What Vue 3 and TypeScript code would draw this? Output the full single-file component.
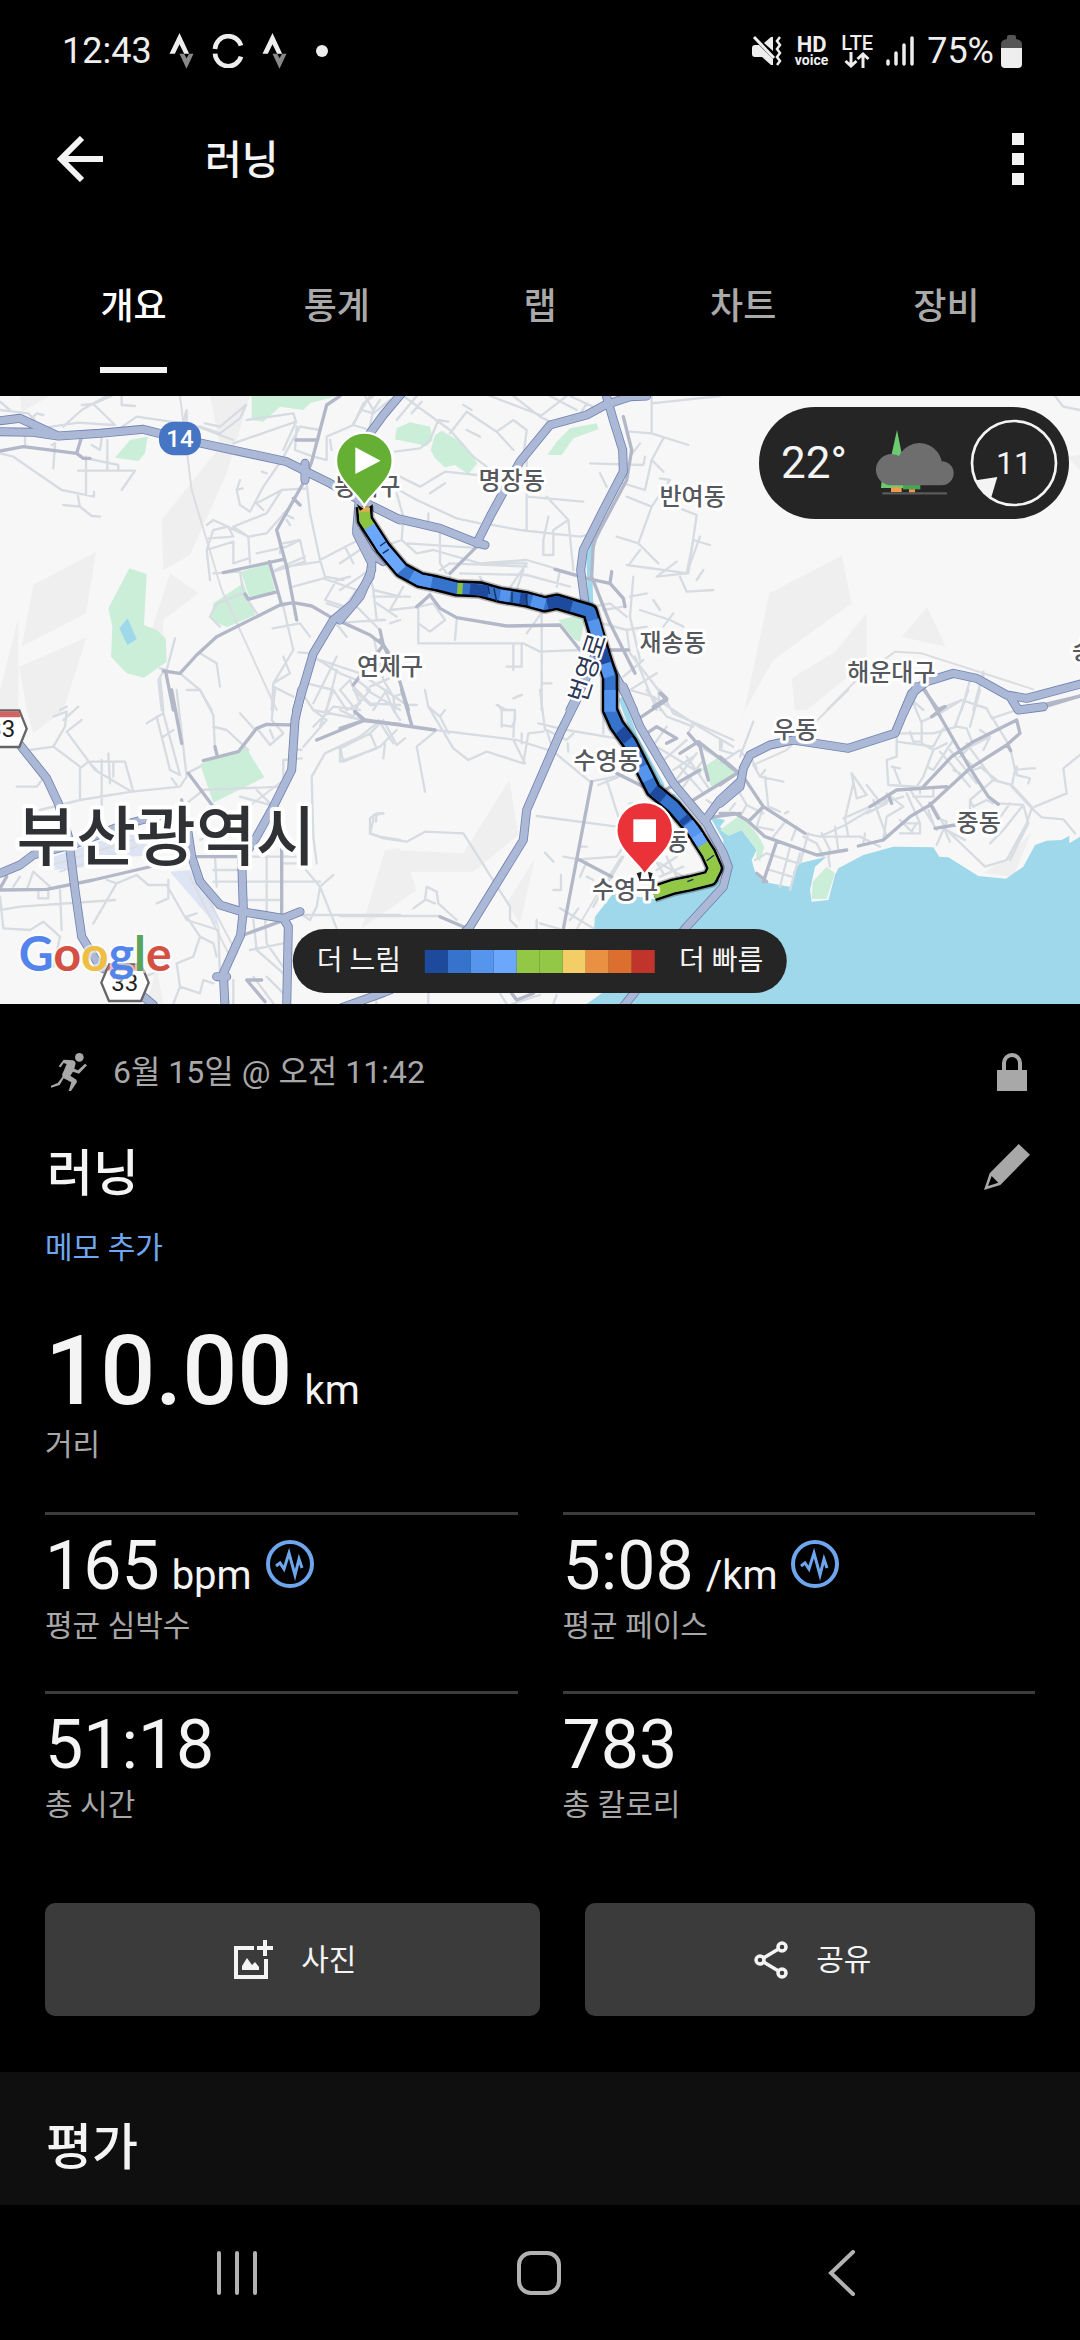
<script setup lang="ts">
import { ref } from 'vue'

type Piece = [tile: number, d: string]
interface Layer { kind: string; pieces: Piece[] }
interface Stat { value: string; unit?: string; label: string; trend?: boolean }

const tabs = ['개요', '통계', '랩', '차트', '장비']
const activeTab = ref(0)

const stats: Stat[] = [
  { value: '165', unit: 'bpm', label: '평균 심박수', trend: true },
  { value: '5:08', unit: '/km', label: '평균 페이스', trend: true },
  { value: '51:18', label: '총 시간' },
  { value: '783', label: '총 칼로리' },
]

const paceColors = ['#1d4a9c', '#3673cc', '#5595ee', '#6ba7fa', '#92c846', '#92c846', '#f3cd66', '#ea9042', '#dc6f2d', '#c1342c']

// The map is stored in six tiles; each geometry is relative to its tile's origin.
const tiles = [[0, -18], [1020, -18], [2160, -18], [0, 882], [1020, 882], [2160, 882]]
const at = (t: number) => `translate(${tiles[t][0]} ${tiles[t][1]})`

const areas: Layer[] = [
  { kind: 'terrain', pieces: [
    [0, 'M100 585L288 485L258 670L65 770ZM58 830L260 742L190 960L100 1030L80 960ZM485 390L660 170L630 18H750L680 250L570 495L490 540ZM510 550L595 610L490 690V735L455 720ZM55 685V960H0V900ZM60 18H150L65 65Z'],
    [2, 'M148 610L365 497L395 640L160 810L75 960L65 1000ZM215 865L345 785L440 670V815L260 960L225 960ZM545 740L622 652L677 770ZM1040 200L1080 195V240Z'],
    [4, 'M160 480L370 490L508 270L535 435L400 545L210 545L230 600L65 715ZM500 640L585 505L540 700Z'],
    [3, 'M1155 480L1200 475V600L1085 715ZM470 830L490 942H440Z'],
    [5, 'M790 550L865 500L935 425L880 560Z'],
  ] },
  { kind: 'yard', pieces: [
    [3, 'M160 500L370 430L480 450L470 495L390 500L370 485L260 530L165 540ZM510 545L570 540L640 640L660 720Z'],
  ] },
  { kind: 'park', pieces: [
    [0, 'M755 18H1010L930 40L910 60L840 50L790 95L755 90ZM390 150L443 140L435 190L415 213L345 203ZM388 535L440 552L432 705L470 720L497 745L500 815L432 863L380 850L333 800L337 710L325 655ZM723 545L805 520L825 605L750 628ZM640 640L730 580L765 675L680 712L635 690ZM1190 130L1200 115V150H1188Z'],
    [1, 'M170 115L210 97L270 110L278 150L260 168L165 148ZM285 135L305 122L370 160L412 220L385 253L345 225L315 232L285 205L272 180ZM650 155L690 115L770 100L775 118L700 145L665 195H622ZM655 690L700 680L735 690L720 755L705 750Z'],
    [3, 'M600 222L738 172L793 262L640 338Z'],
    [4, 'M1085 235L1130 205L1180 250L1115 290ZM860 340L880 335V350Z'],
  ] },
  { kind: 'water', pieces: [
    [0, 'M383 685L410 748L382 765L358 715Z'],
    [5, 'M-378 717L-375 680L-320 610L-180 630L-90 600L10 565L10 450L-30 380L15 390L0 410L25 437L65 420L110 480L95 510L105 545L130 575L215 592L220 545L240 520L320 500L285 530L270 600L275 635L325 630L345 555L355 535L430 495L520 470L640 472L658 500L685 502L775 558L858 566L910 530L945 465L980 452L1025 450L1048 437V460L1080 440V942H-400L-355 910Z'],
  ] },
  { kind: 'park', pieces: [
    [5, 'M0 200L45 245L0 280ZM0 420L60 375L110 430L133 470L120 515L108 500L110 480L65 420L25 437ZM278 575L320 530L345 550L320 627H275Z'],
  ] },
]

const roads: Layer[] = [
  { kind: 'river', pieces: [
    [1, 'M762 455L747 500L752 640'],
    [4, 'M845 30L885 140L965 285M1000 320L1080 420'],
  ] },
  { kind: 'rail', pieces: [
    [0, 'M540 18L575 300L665 600L830 960'],
    [2, 'M320 960L410 870L525 785L605 790L940 898'],
    [5, 'M385 0L200 180L100 225'],
    [3, 'M570 560L690 800M590 560L710 790M140 530L400 450M180 545L410 470M600 450L640 430L845 275'],
    [4, 'M845 500L780 600L710 717'],
  ] },
  { kind: 'minor', pieces: [
    [0, 'M0 60L85 70L105 90M0 35L30 60M95 85L110 70L130 75M120 115L235 98L340 105M190 110L245 60L320 18M245 45L280 42L345 105M280 42L335 18M365 18V45L405 48M410 80L360 115M410 80L580 105L700 150M550 95L560 60V110M615 100L660 110L738 45L720 85L660 130L600 110M740 90L880 70L888 95L700 160M888 95L850 180M155 165L165 160L160 235M0 190L40 200L185 300L282 320V305M232 310L240 350L190 345M240 350L275 378L300 380M258 200V315M235 242H405L365 300M322 150V240M270 207L355 225V240M275 165L300 180L305 145M75 165V140L60 125'],
    [0, 'M720 270L710 300L720 345L750 365L790 290L845 210L900 110M845 300L770 340L790 360M710 300L728 295M620 405L640 390L745 440L700 410L800 370L845 300L920 295M625 445L700 440L685 410L640 420L620 480L630 570M620 480L700 455M700 455V520L745 505M745 440L750 520M745 440L800 430L870 350M640 550L720 545L730 610L650 640L630 680L660 710M730 610L770 670M770 490L860 470L900 450L915 515L820 545M900 450L850 460M840 490V460M915 500L825 540M850 370L880 385M860 390L870 405M920 280L930 370L960 510L975 560L1030 570M960 510L1075 450M860 530L960 515M880 590L970 565L1070 600L1035 650L975 630L1010 570L1050 560M980 640L1040 660M1035 470L1060 520M818 715L900 700L930 740M850 650L880 780L820 880L815 960M820 880L870 850L850 800M820 890L880 920M895 787L935 790M785 245L800 250'],
    [0, 'M600 790L650 820L660 890M480 835L500 840L525 745M480 860L490 960M540 850L600 900L635 960M490 845L475 870L485 960M180 960L200 950M900 110L960 120L955 150M890 110L885 180L940 200L980 210V140L1060 105L1110 120M1060 105L1090 40L1120 18M1085 60L1120 70L1170 30M990 150L995 180M1000 690L1040 740M1110 560L1120 600L1200 620M1120 600L1130 690M1060 640L1140 720M940 800L1020 850L1070 870L1110 900L1060 960M960 810L1080 850M920 880L1000 900L1040 960M1010 800L940 940M1060 890L1110 940L1200 945M990 700L1150 690M1130 640L1190 680M1180 860L1110 890M1010 840L980 960'],
    [1, 'M40 100L90 18M75 18L100 60L85 130M100 60L120 30M170 90L230 18M165 185L240 175L270 150L295 90L325 95M215 70L245 35M190 18L330 120L400 200L440 230M370 45L395 60M380 65L330 130M380 65L470 125L520 90L560 120L550 200M380 120L420 140M470 125L520 180M520 18L600 80L640 100M450 18L600 75M600 80L680 18M630 18L710 60M710 90L740 40M690 18L780 60M935 40L1140 18M935 18V130L1045 165M870 125L935 130M970 145L935 210L915 300L850 280M935 210L970 245M750 220L910 225L915 200M780 250L800 290M870 200L900 160M860 320L935 350L895 460L955 520M935 350L990 270L960 265M900 480L870 520M895 460L830 440M1020 355L1070 375L1045 550L860 525'],
    [1, 'M160 290L230 330L350 385L420 400M180 260L240 290L315 245L410 255M270 310L315 280M170 310L190 380L185 450L70 490M185 450L230 490L280 480L420 520L560 510L730 560M200 460L430 475M300 420V520L320 550M265 370V410M430 400L540 420L720 440L760 430M560 420V320L730 335M560 200V320M620 320L685 390L700 540M685 390L640 420V495H610V450L625 380M405 520H560L505 600M550 540L530 600M660 540L650 590M190 590L150 660L240 650L270 610M240 650L280 640L315 690L270 725L235 700M100 620H210M235 650V760L550 760L600 785L720 780M345 750L350 690M545 760V830H500M520 760V840M605 610V880H635M605 880V960M300 540L330 520L560 530M330 560L320 600M360 550L560 555L690 590M420 560L440 600M640 620L560 730M0 520L60 480M0 600L60 560L100 530M110 690H135M150 700L180 690M0 690L100 740L130 870'],
    [1, 'M30 870L0 900M30 870L60 940L20 960M130 870L160 920L165 960M60 850L200 945H230M470 945L500 960M520 925L545 915M760 650L810 640L860 680M790 660L850 650M870 620L920 610M940 630L960 660M900 660L990 690L1030 710M1000 670L970 710M1010 515L950 560L1040 550L1060 450L1110 465M1090 540L1070 570M1020 560L1040 605L1120 600M750 690L860 720L870 790L955 900L960 960M860 720L920 710M850 860L910 810M870 900L950 850M885 800L950 960M1080 440L1040 550M880 560L870 680L900 810'],
    [2, 'M1005 18L1030 50L1080 60M575 930L610 960M650 960L725 930L800 955M725 960L750 870M760 960L790 845M790 860V845'],
    [3, 'M480 0L490 70L440 100M490 70L540 255L510 240L470 80M520 120L490 140M530 0L560 260L540 290L395 305L240 330L120 360M515 265L530 285M160 80L200 65L195 110L160 170L90 180M235 50L190 90M245 90L200 125M200 125L285 240L395 305M160 170L240 230V330M240 235L265 215H375L400 305M325 190L330 280M305 210V350M340 220V260M265 215L290 240M50 290H110L130 265M600 0L640 75L645 180M640 110L680 120L745 180M720 70L765 120M825 0L815 90L850 130L810 165L775 120M810 120L820 145M560 0L600 0M560 250L600 230M560 340L610 300M600 300L850 290M850 275V210L905 205M905 180L870 175M900 0L940 60L980 90L910 170M940 60L1090 90M1000 0L960 110M940 110L1000 50L1080 60M1020 0L1060 50M1100 0L1200 60M1120 60L1160 0M1135 90L1180 160L1160 130'],
    [3, 'M910 400V530L960 590L1010 715M960 590L1000 555M960 590L950 650L930 690L900 670M950 520L940 440L935 260L975 190L1080 140L1130 100M1020 170L1030 215L1140 170L1190 120M1150 370L1120 375V390L1110 430L1140 440L1200 450M640 575H960M640 540H720M745 500H900M645 500L650 590M900 400V530M800 450V690M740 630H840M845 520H900M720 320L830 350M770 300L820 350M0 620L10 715L90 720L130 695L180 740L160 830M0 660L60 650L345 630M80 600L100 545L150 590M115 600V625H145V600M180 600L185 720M60 560L40 590M280 700L350 580L320 570M350 580L410 555L445 585H500L560 690L655 720M505 570V625L470 640M590 670L560 680L600 740L580 800L530 820M655 720L660 860M600 740L640 760L650 800M900 675H1200M795 680L800 760L870 860M760 690L770 780L850 850M750 780L850 760M530 820L540 890L520 942M540 890L600 910L610 870L640 880M760 860L820 940M800 860L860 920M700 870L700 942M1010 715V717M430 860L460 850'],
    [4, 'M255 0L265 50L340 175L385 210L440 185L550 220L565 130L610 125M265 50L300 80L315 60M300 80L325 130M600 0L615 120M595 100L680 120L830 145M485 110V60L475 45M485 60H525L520 140M525 60V90L515 110L485 105M285 120L530 150L640 185L750 275L850 255M520 150L555 220M545 130V160M640 185L620 120L680 150L700 130M683 160L685 185M530 20L545 15M0 175L90 130L110 175L0 215V175M90 130L130 90L170 165L195 145M135 160L130 205M230 170L285 125M230 170L255 305M0 60L40 80L60 30M40 0L90 45L110 45M135 0L160 60L180 90M160 20L190 10M255 425L370 430L510 650V690L530 710M255 425L200 455L130 445L90 430V385L110 370H130M110 370L108 395M590 378L830 410M800 270L835 380M775 285L850 255M720 470H740M615 488L640 515M670 500L715 508L830 500L850 470M720 560L740 515M740 560L760 570M663 555V600H640M220 655L255 630L260 590L290 605L295 640L350 690M260 630L285 640M0 678H300M660 655L760 715M690 690L715 655M590 690V717M600 700L660 717M265 910V942M105 920L110 942M480 910L500 942M515 942L600 915M640 942L650 915'],
    [4, 'M870 0L940 20L1060 100L1180 170M920 0L980 80L1060 110M960 0L1000 70L1180 150M1060 100L1045 130M1145 150V175M950 170L1000 200L1080 250M930 180L980 110M960 220L1040 150M1000 280L1070 190M1030 290L1090 210M1040 200L1110 300M1020 230L1090 310M1130 200L1080 170M1060 200L1000 240M960 520L1030 560M940 500L970 550M980 500L1010 560M950 540L1010 500M960 560L1030 530M1100 330L1130 350M850 500L760 650M790 0V130'],
    [5, 'M0 150V180L35 190M0 220L60 180L75 200M60 200L100 95M100 225L120 260L190 275M120 260L135 240M135 260L145 350L180 365M110 235L90 200M195 370L205 365M60 310L80 345L60 380M80 345L130 370M45 340L30 360M130 350L110 410L160 420M200 390L160 440M230 410L215 450M395 250L410 325L440 315L395 250L400 280L375 385L385 440M440 285L475 330M370 385L450 350L550 320M255 430L300 440L375 405L450 360M265 430L240 520M170 455L310 500L290 460L250 440M305 430L330 480L325 500L330 530M210 470L180 590M240 490L210 600M140 490L235 520M150 540L215 560M105 510L140 490M345 410L355 480M300 440L420 440L480 470M435 430L430 460M460 330L500 440M540 430H600V400M500 310L550 350L500 380L490 450M540 390L580 430M555 400H600L560 310M590 400L570 430'],
    [5, 'M580 40L605 100V160L640 180L610 260L590 290L505 285L500 210L530 200V130L640 130L710 110L740 115L760 165M605 95L660 70L725 30L800 55L815 85L890 60M745 0L705 110M780 0L750 110M815 80L870 170L885 240L875 290L935 355L920 400L860 510L795 530L680 420M540 235L515 230M520 230L540 280M570 125L580 155H600M530 155L640 170L670 115M640 180L680 160M620 230L640 240L700 150M660 185L750 290M690 180L770 280M740 160L820 270L875 285M780 230L830 270M720 200L750 170L810 140L780 120M810 140L790 180M700 240L720 250M740 210L760 230M760 240L790 230M820 270L750 330L760 350L800 330L820 340M750 330V380M885 240L930 235H945M890 230V255L930 265L925 280M945 350L1040 310L1030 235L1080 195M935 355L965 382L1030 388L1065 430M835 340L910 345L850 420L810 460M870 340L820 410M910 345L925 400L870 510M940 355L875 285M655 385L680 395L650 465M670 410L690 455M600 290V310M570 300L620 370L650 420M625 360L640 400M640 350L680 420L735 450M580 320H640V300M510 330H490M500 340L440 370'],
  ] },
  { kind: 'mid', pieces: [
    [0, 'M0 183L70 170L230 190L250 205H270M230 190L245 140M1020 18L980 45L935 215L915 270L830 420L860 530L890 690M670 548L850 508M808 515L845 645M735 612L745 628L825 607M490 843L540 850L590 795L650 740L770 680L840 645L880 638L935 648L990 680L1110 735L1150 765L1190 850M498 850L520 960M888 150H950M1060 885L1150 765L1140 720M880 325L900 345'],
    [1, 'M410 470L330 550M270 615L300 655L350 683L500 708L660 705L720 780H865M230 650L270 615M645 538L740 565L810 580L850 625L855 650M815 545L810 580M850 80L875 180L860 270L780 420L760 460L755 560L810 700L885 850M120 750L160 810L205 960M940 950L980 925L965 910'],
    [2, 'M605 890L655 960M900 960L1080 918M650 960L675 950'],
    [3, 'M515 0L545 160M0 600L140 598L280 570L460 528M565 250L640 350M580 500H720M845 460V690M610 212L715 185L770 115L800 103L880 105M950 150L1090 92L1200 103M1065 65L1090 90M730 735L840 695M740 870H785M740 870L795 935M645 170L652 200M0 595L20 560M545 330L575 520L660 650'],
    [4, 'M0 115L75 90L285 120M45 65L75 90M185 0L215 105M755 275L670 717M715 508L815 560M300 680L370 710M905 80L980 30L960 10M920 130L950 110L1010 145L980 160M1020 190L1075 155L1190 245M1045 130L1080 170L1105 270M1060 330L1190 250M975 300L1080 240M830 250L940 305M1090 385L1200 370M515 910L530 930L580 910'],
    [5, 'M0 200L70 260L130 350L255 430M0 370L45 370L80 390L135 440L290 495L380 480M0 285L50 250M170 455L130 575M90 390L130 350M450 350L530 300L680 290M610 290L695 200L760 155L890 90L900 130L860 165L750 235L630 345L570 380L490 450L415 468M615 0L750 235L805 320L835 343M630 340L655 385M645 415L705 405M862 165L872 182M635 80L675 50M110 550L140 575M975 50L1080 18M505 315L515 340'],
  ] },
]

const highwayPieces: Piece[] = [
  [0, 'M0 92L60 85L175 138M0 125L100 127L175 138L300 130L430 118L550 148L860 215L920 245L990 280L1060 320L1200 390M915 220V270M1070 430L1115 520L1110 560L1060 640L1000 690L940 790L890 960'],
  [1, 'M100 350L170 385L300 415L400 455L435 465M410 460L450 380L540 215L630 105L740 75L795 45L870 20L920 18M797 10L820 90L848 180L850 245L790 360L730 480L722 540L735 640L760 740L850 900L880 960M185 10L130 75L90 130L65 250L50 420L90 490L130 515M95 500V540L60 620L0 690M690 960L740 860L770 780'],
  [2, 'M550 970L575 910L620 875L700 850L770 865L860 915L920 925L1090 880M870 920L895 960L970 950'],
  [3, 'M905 0L885 90L875 240L820 350L770 440L725 510L730 660L722 735L670 850L675 950M650 860H680M60 165L140 265L175 340L205 440L225 600L245 740L300 830L360 860L460 945M0 550L60 525L100 495L230 460L370 405L480 375L560 400L575 500L600 575L660 645L725 665L850 685L900 665M850 685L865 710L860 950'],
  [4, 'M710 30L660 130L560 360L550 450L390 710L250 860L130 908L0 955M850 -10L900 110L1000 280L1100 400L1150 490L1165 530L1150 590L1040 710L850 950M1100 385L1140 330L1200 275'],
  [5, 'M0 340L60 290L70 235L90 195L150 165L220 150L385 175L525 130L550 70L590 -10'],
]

const route = 'M72 350L75 390L130 475L185 540L240 570L290 580L350 595L420 598L480 615L560 628L615 643L650 635L750 665L790 800L810 860V960L830 1005L870 1060L905 1130L940 1200L1000 1250L1060 1320L1105 1390L1125 1435L1110 1465L1050 1480L1000 1490L940 1510'
const routeParts = [
  { color: '#ddaf50', d: 'M72 350L73 368' },
  { color: '#8ac43f', d: 'M73 366L75 390L90 412' },
  { color: '#6ba7fa', d: 'M88 410L130 475L185 540' },
  { color: '#5595ee', d: 'M215 556L240 570L275 577M790 805L808 860M810 900V965' },
  { color: '#8ac43f', d: 'M352 595L368 596' },
  { color: '#1d4a9c', d: 'M390 597L445 604M540 625L562 628M622 642L650 635L695 648M785 780L797 820M940 1200L970 1225M1030 1283L1042 1297' },
  { color: '#5595ee', d: 'M480 615L510 620M575 632L615 643M760 690L782 770M905 1130L925 1170M1045 1300L1075 1342' },
  { color: '#1d4a9c', d: 'M840 1020L865 1050' },
  { color: '#6ba7fa', d: 'M1070 1335L1090 1367' },
  { color: '#92c846', d: 'M1088 1364L1105 1390L1125 1435L1110 1465L1050 1480L1000 1490L940 1510' },
]

const places = [
  { name: '동래구', tile: 0, x: 1102, y: 316 },
  { name: '명장동', tile: 1, x: 515, y: 296 },
  { name: '반여동', tile: 1, x: 1058, y: 344 },
  { name: '재송동', tile: 1, x: 998, y: 784 },
  { name: '연제구', tile: 1, x: 150, y: 855 },
  { name: '해운대구', tile: 2, x: 514, y: 874 },
  { name: '송정동', tile: 2, x: 1155, y: 808 },
  { name: '수영동', tile: 4, x: 800, y: 236 },
  { name: '광안동', tile: 4, x: 945, y: 480 },
  { name: '수영구', tile: 4, x: 855, y: 625 },
  { name: '우동', tile: 5, x: 226, y: 143 },
  { name: '중동', tile: 5, x: 776, y: 424 },
]
</script>

<template>
  <div class="screen">
    <header class="status">
      <div class="status-left">
        <span class="clock">12:43</span>
        <svg class="strava" viewBox="486 100 72 108"><path d="M516 100L545 162H530L516 134L502 162H486Z" fill="#eee" /><path d="M516 162H530L537 176L545 162H558L537 207Z" fill="#888" /></svg>
        <svg class="ring" viewBox="612 102 98 102"><path d="M622 147A40 41 0 0 1 700 137M622 161A40 41 0 0 0 700 170" fill="none" stroke="#eee" stroke-width="14" /></svg>
        <svg class="strava" viewBox="486 100 72 108"><path d="M516 100L545 162H530L516 134L502 162H486Z" fill="#eee" /><path d="M516 162H530L537 176L545 162H558L537 207Z" fill="#888" /></svg>
        <span class="more-dot"></span>
      </div>
      <div class="status-right">
        <svg width="30" height="30" viewBox="0 0 30 30" fill="#eee"><path d="M0 12Q0 9 3 9H7L21 23V29H19L10 21H3Q0 21 0 18ZM12 7L19 1H21V15Z" /><path d="M2 1L22 22" stroke="#eee" stroke-width="3" /><path d="M28 1L25 5L28 9L25 13L28 17L25 21L28 25L25 29" fill="none" stroke="#eee" stroke-width="2.5" /></svg>
        <span class="hd"><b>HD</b><small>voice</small></span>
        <span class="lte"><b>LTE</b><svg width="26" height="16" viewBox="0 0 26 16" fill="none" stroke="#eee" stroke-width="3"><path d="M7 0V14M1.5 9L7 14L12.5 9M19 16V2M13.5 7L19 2L24.5 7" /></svg></span>
        <svg width="28" height="30" viewBox="0 0 28 30" stroke="#eee" stroke-width="3.5" stroke-linecap="round"><path d="M2 25V28M10 17V28M18 9V28M26 2V28" /></svg>
        <span class="clock battery-text">75%</span>
        <svg width="21" height="33" viewBox="0 0 21 33"><path d="M6 2Q6 0 8 0H13Q15 0 15 2V4Q21 5 21 9V13H0V9Q0 5 6 4Z" fill="#555" /><path d="M0 13H21V29Q21 33 17 33H4Q0 33 0 29Z" fill="#eee" /></svg>
      </div>
    </header>

    <div class="appbar">
      <button class="plain" aria-label="뒤로"><svg width="46" height="46" viewBox="0 0 46 46" fill="none" stroke="#f4f4f4" stroke-width="6"><path d="M46 23H5M25 2L4 23L25 44" /></svg></button>
      <h1>러닝</h1>
      <button class="plain" aria-label="메뉴"><svg width="12" height="52" viewBox="0 0 12 52" fill="#f4f4f4"><path d="M0 0H12V12H0ZM0 20H12V32H0ZM0 40H12V52H0Z" /></svg></button>
    </div>

    <nav class="tabs">
      <button v-for="(tab, i) in tabs" :key="tab" class="tab" :class="{ active: i === activeTab }" @click="activeTab = i"><span>{{ tab }}</span></button>
    </nav>

    <section class="map">
      <svg class="map-canvas" viewBox="0 0 3240 1824" preserveAspectRatio="xMidYMid slice">
        <g v-for="(layer, i) in areas" :key="'a' + i" :class="layer.kind">
          <path v-for="(p, j) in layer.pieces" :key="j" :transform="at(p[0])" :d="p[1]" />
        </g>
        <g v-for="layer in roads" :key="layer.kind" class="road" :class="layer.kind">
          <path v-for="(p, j) in layer.pieces" :key="j" :transform="at(p[0])" :d="p[1]" />
        </g>
        <g v-for="kind in ['casing', 'highway']" :key="kind" class="road" :class="kind">
          <path v-for="(p, j) in highwayPieces" :key="j" :transform="at(p[0])" :d="p[1]" />
        </g>

        <g :transform="at(1)" fill="none" stroke-linejoin="round">
          <path :d="route" stroke="#000" stroke-opacity=".25" stroke-width="58" />
          <path :d="route" stroke="#000" stroke-width="49" />
          <path :d="route" stroke="#3673cc" stroke-width="34" />
          <path v-for="(part, i) in routeParts" :key="i" :d="part.d" :stroke="part.color" stroke-width="34" />
          <path d="M120 468L138 455M128 490L146 478M462 595L470 635M516 605V638M558 612L562 648M445 590L448 612M1100 1412L1122 1396M1042 1475L1060 1468" stroke="#12305f" stroke-width="4" />
        </g>

        <g class="place">
          <text v-for="p in places" :key="p.name" :transform="at(p.tile)" :x="p.x" :y="p.y">{{ p.name }}</text>
        </g>
        <g :transform="at(1)"><text class="street" transform="translate(768 842) rotate(-72)">번영로</text></g>
        <g :transform="at(3)">
          <text class="city" x="498" y="510">부산광역시</text>
          <path class="shield" d="M-48 61H58L80 116L58 171H-48L-70 116Z" /><path d="M-48 64H56L62 82H-54Z" fill="#cf6663" /><text class="shield-text" x="5" y="142">33</text>
          <path class="shield" d="M327 823H423L446 878L423 933H327L304 878Z" /><path d="M327 826H423L430 842H320Z" fill="#cf6663" /><text class="shield-text" x="374" y="903">33</text>
          <text class="google" x="56" y="842"><tspan fill="#5284ec">G</tspan><tspan fill="#d35043">o</tspan><tspan fill="#efbf45">o</tspan><tspan fill="#5284ec">g</tspan><tspan fill="#5ba55b">l</tspan><tspan fill="#d35043">e</tspan></text>
        </g>
        <g :transform="at(0)"><rect x="477" y="95" width="126" height="101" rx="46" fill="#4575c3" /><text class="route-no" x="540" y="170">14</text></g>

        <g :transform="at(1)">
          <path d="M50 342L70 356L60 362ZM98 342V362L88 352Z" fill="#000" />
          <path class="pin" d="M73 348C52 308 -12 272 -12 213A85 85 0 1 1 158 213C158 272 94 308 73 348Z" fill="#65b034" />
          <path d="M46 172L122 212L46 252Z" fill="#fff" />
        </g>
        <g :transform="at(4)">
          <path d="M890 550L905 545L900 575ZM938 550L924 545L930 575Z" fill="#222" />
          <path class="pin" d="M914 555C893 515 829 480 829 421A85 85 0 1 1 999 421C999 480 935 515 914 555Z" fill="#e93338" />
          <path d="M880 388H948V456H880Z" fill="#fff" />
        </g>
      </svg>

      <div class="weather">
        <span class="temp">22°</span>
        <svg class="sky" width="80" height="66" viewBox="0 0 240 198">
          <path d="M66 0L84 90H46ZM20 150H110V174H18Z" fill="#6ccb70" /><path d="M84 164H136V178H84Z" fill="#4aa350" />
          <path d="M48 172H80V186H48ZM102 178H120V188H102Z" fill="#eb9b4b" /><path d="M22 190H216" stroke="#5a5a5a" stroke-width="7" />
          <path d="M44 166A47 47 0 1 1 72 78A68 68 0 0 1 200 94A36 36 0 0 1 200 166Z" fill="#6e6e6e" />
        </svg>
        <span class="wind">
          <svg width="88" height="88" viewBox="0 0 264 264"><circle cx="132" cy="132" r="126" fill="none" stroke="#f4f4f4" stroke-width="8" /><path d="M18 184L82 174L63 238Q32 214 18 184Z" fill="#f4f4f4" /></svg>
          <span>11</span>
        </span>
      </div>

      <div class="legend">
        <span>더 느림</span>
        <div class="scale"><i v-for="(c, i) in paceColors" :key="i" :style="{ background: c }"></i></div>
        <span>더 빠름</span>
      </div>
    </section>

    <main class="details">
      <div class="meta">
        <svg width="36" height="38" viewBox="0 0 108 114" fill="#a8a8a8"><circle cx="85" cy="13" r="13" /><path d="M38 20L66 22Q78 27 72 38L70 47L81 52L102 32L108 37L84 62L66 56L58 68L76 80L78 87L60 114H53L61 88L38 76L26 96L0 104V98L20 90L34 72Q32 62 38 54L47 33L38 30L29 43L23 40Z" /></svg>
        <time>6월 15일 @ 오전 11:42</time>
        <svg width="30" height="38" viewBox="0 0 30 38"><path d="M0 17H30V38H0Z" fill="#a8a8a8" /><path d="M7 18V10A8 8 0 0 1 23 10V18" fill="none" stroke="#a8a8a8" stroke-width="4" /></svg>
      </div>
      <div class="title-row">
        <h2>러닝</h2>
        <button class="plain" aria-label="편집"><svg width="46" height="46" viewBox="0 0 138 138" fill="#a8a8a8"><path d="M104 0L138 32L49 123L0 138L17 88ZM23 96L12 126L43 116Z" fill-rule="evenodd" /></svg></button>
      </div>
      <a class="memo" href="#memo">메모 추가</a>

      <p class="distance"><strong>10.00</strong><span class="unit">km</span></p>
      <p class="label">거리</p>

      <div class="stats">
        <div v-for="s in stats" :key="s.label" class="stat">
          <p class="value">
            <span>{{ s.value }}</span><span v-if="s.unit" class="unit">{{ s.unit }}</span>
            <svg v-if="s.trend" class="trend" viewBox="0 0 48 48" fill="none" stroke="#6ea6ee"><circle cx="24" cy="24" r="22" stroke-width="4" /><path d="M10 26L14 23L18 29L23 13L29 35L33 19L36 28" stroke-width="3" /></svg>
          </p>
          <p class="label">{{ s.label }}</p>
        </div>
      </div>

      <div class="actions">
        <button class="action photo"><svg width="39" height="40" viewBox="0 0 39 40"><path d="M20 8H2V37H32V19" fill="none" stroke="#f4f4f4" stroke-width="4" /><path d="M31 0V16M23 8H39" stroke="#f4f4f4" stroke-width="4" /><path d="M8 30V26L13 18L18 25L21 22L25 27V30Z" fill="#f4f4f4" /></svg>사진</button>
        <button class="action"><svg width="34" height="38" viewBox="0 0 34 38" fill="none" stroke="#f4f4f4" stroke-width="3.5"><circle cx="28" cy="6" r="4" /><circle cx="6" cy="19" r="4" /><circle cx="28" cy="32" r="4" /><path d="M9.5 17L24.5 8M9.5 21L24.5 30" /></svg>공유</button>
      </div>
    </main>

    <section class="rating"><h2>평가</h2></section>

    <footer class="navbar">
      <button class="plain" aria-label="최근 앱"><svg width="44" height="46" viewBox="0 0 44 46" stroke="#b2b2b2" stroke-width="4" stroke-linecap="round"><path d="M4 3V43M22 3V43M40 3V43" /></svg></button>
      <button class="plain" aria-label="홈"><svg width="44" height="46" viewBox="0 0 44 46" fill="none" stroke="#b2b2b2" stroke-width="4"><rect x="2" y="3" width="40" height="40" rx="12" /></svg></button>
      <button class="plain" aria-label="뒤로 가기"><svg width="44" height="46" viewBox="0 0 44 46" fill="none" stroke="#b2b2b2" stroke-width="4" stroke-linecap="round"><path d="M34 2L12 23L34 44" /></svg></button>
    </footer>
  </div>
</template>

<style>
body { background: #000; }
</style>

<style scoped>
.screen { background: #000; color: #f4f4f4; font-family: Roboto, "Noto Sans CJK KR", sans-serif; font-size: 30px; }
h1, h2, p { margin: 0; font-weight: 500; }
svg { display: block; flex: none; }
.plain { display: block; padding: 0; border: 0; background: none; }

.status { display: flex; align-items: center; justify-content: space-between; height: 102px; padding: 0 58px 0 62px; }
.status-left, .status-right { display: flex; align-items: center; }
.clock { font-size: 36px; line-height: 40px; color: #eee; }
.status-left { gap: 17px; }
.strava { width: 25px; height: 36px; }
.ring { width: 34px; height: 34px; }
.more-dot { width: 12px; height: 12px; margin-left: 12px; border-radius: 50%; background: #eee; }
.status-right { gap: 13px; }
.hd, .lte { display: flex; flex-direction: column; align-items: center; color: #eee; }
.hd b { font-size: 22px; line-height: 18px; }
.hd small { font-size: 14px; line-height: 12px; font-weight: 700; }
.lte b { font-size: 20px; line-height: 18px; font-weight: 500; }
.battery-text { margin-right: -6px; }

.appbar { display: flex; align-items: center; height: 114px; padding: 0 56px 0 57px; }
.appbar h1 { flex: 1; margin-left: 102px; padding-top: 4px; font-size: 40px; line-height: 48px; }
.tabs { display: flex; height: 180px; padding: 0 32px; }
.tab { flex: 1; display: flex; justify-content: center; align-items: flex-end; padding: 0 0 23px; border: 0; background: none; color: #a9a9a9; font: 500 36px/48px Roboto, "Noto Sans CJK KR", sans-serif; }
.tab span { padding-bottom: 36px; border-bottom: 6px solid transparent; }
.tab.active { color: #fff; }
.tab.active span { border-color: #f4f4f4; }

.map { position: relative; height: 608px; overflow: hidden; background: #f7f7f7; }
.map-canvas { width: 100%; height: 100%; }
.terrain { fill: #efefef; }
.yard { fill: #dde4f4; }
.park { fill: #cbeed8; }
.water { fill: #9fd8ea; }
.road { fill: none; stroke-linejoin: round; stroke-linecap: round; }
.river { stroke: #9fd8ea; stroke-width: 16px; }
.rail { stroke: #dcdde0; stroke-width: 6px; }
.minor { stroke: #d7dce2; stroke-width: 7px; }
.mid { stroke: #b2b8c8; stroke-width: 10px; }
.casing { stroke: #7282b2; stroke-width: 27px; }
.highway { stroke: #abb8d6; stroke-width: 22px; }
.place text, .city, .street { font-family: "Noto Sans CJK KR", sans-serif; text-anchor: middle; paint-order: stroke; stroke: #fff; stroke-linejoin: round; }
.place text { font-size: 72px; font-weight: 500; fill: #55585c; stroke-width: 18px; }
.street { font-size: 76px; fill: #2b3656; stroke-width: 14px; }
.city { font-size: 195px; font-weight: 500; fill: #2f3134; stroke-width: 24px; }
.shield { fill: #fff; stroke: #666; stroke-width: 7px; }
.shield-text { font-size: 72px; text-anchor: middle; fill: #222; }
.route-no { font-size: 72px; font-weight: 500; text-anchor: middle; fill: #fff; }
.google { font-family: Lato, sans-serif; font-size: 144px; font-weight: 700; paint-order: stroke; stroke: #fff; stroke-width: 12px; stroke-opacity: .6; }
.pin { stroke: #fff; stroke-width: 7px; }

.weather { position: absolute; top: 11px; right: 11px; display: flex; align-items: center; justify-content: space-between; width: 310px; height: 112px; padding: 0 11px 0 22px; box-sizing: border-box; border-radius: 56px; background: #252525; }
.temp { font-size: 44px; line-height: 52px; }
.sky { margin-left: 14px; }
.wind { display: grid; place-items: center; font-size: 32px; line-height: 36px; }
.wind > * { grid-area: 1 / 1; }
.legend { position: absolute; left: 50%; bottom: 11px; display: flex; align-items: center; gap: 24px; height: 64px; padding: 0 24px; transform: translateX(-50%); border-radius: 32px; background: #252525; font-size: 28px; line-height: 36px; white-space: nowrap; }
.scale { display: flex; }
.scale i { width: 23px; height: 23px; }

.details { padding: 0 45px; }
.meta { display: flex; align-items: center; height: 136px; padding: 0 8px 0 6px; color: #a8a8a8; }
.meta time { flex: 1; margin-left: 26px; font-size: 32px; line-height: 40px; }
.title-row { display: flex; align-items: flex-start; justify-content: space-between; height: 66px; padding: 4px 5px 0 2px; box-sizing: border-box; }
h2 { font-size: 50px; line-height: 60px; }
.memo { display: block; width: max-content; margin-top: 20px; color: #6fa6f0; font-size: 30px; line-height: 44px; text-decoration: none; }
.distance { display: flex; align-items: baseline; margin-top: 53px; line-height: 96px; }
.distance strong { font-size: 97px; font-weight: 500; }
.unit { margin-left: 12px; font-size: 40px; line-height: 48px; font-weight: 400; }
.label { margin-top: 8px; color: #a8a8a8; font-size: 30px; line-height: 36px; font-weight: 400; }
.stats { display: grid; grid-template-columns: 1fr 1fr; gap: 47px 45px; margin-top: 49px; }
.stat { padding-top: 17px; border-top: 3px solid #3c3c3c; }
.value { display: flex; align-items: baseline; height: 68px; font-size: 68px; line-height: 68px; font-weight: 400; }
.trend { width: 48px; height: 48px; margin: 8px 0 0 14px; align-self: flex-start; }
.actions { display: flex; gap: 45px; margin-top: 80px; }
.action { flex: 10; display: flex; align-items: center; justify-content: center; gap: 28px; height: 113px; padding: 0 0 0 6px; border: 0; border-radius: 10px; background: #3b3b3b; color: #f4f4f4; font: 400 30px/36px Roboto, "Noto Sans CJK KR", sans-serif; }
.photo { flex: 11; }
.rating { margin-top: 56px; padding: 46px 46px 27px; background: #0f0f0f; }
.navbar { display: flex; align-items: center; justify-content: space-between; height: 135px; padding: 0 217px 0 215px; }
</style>
